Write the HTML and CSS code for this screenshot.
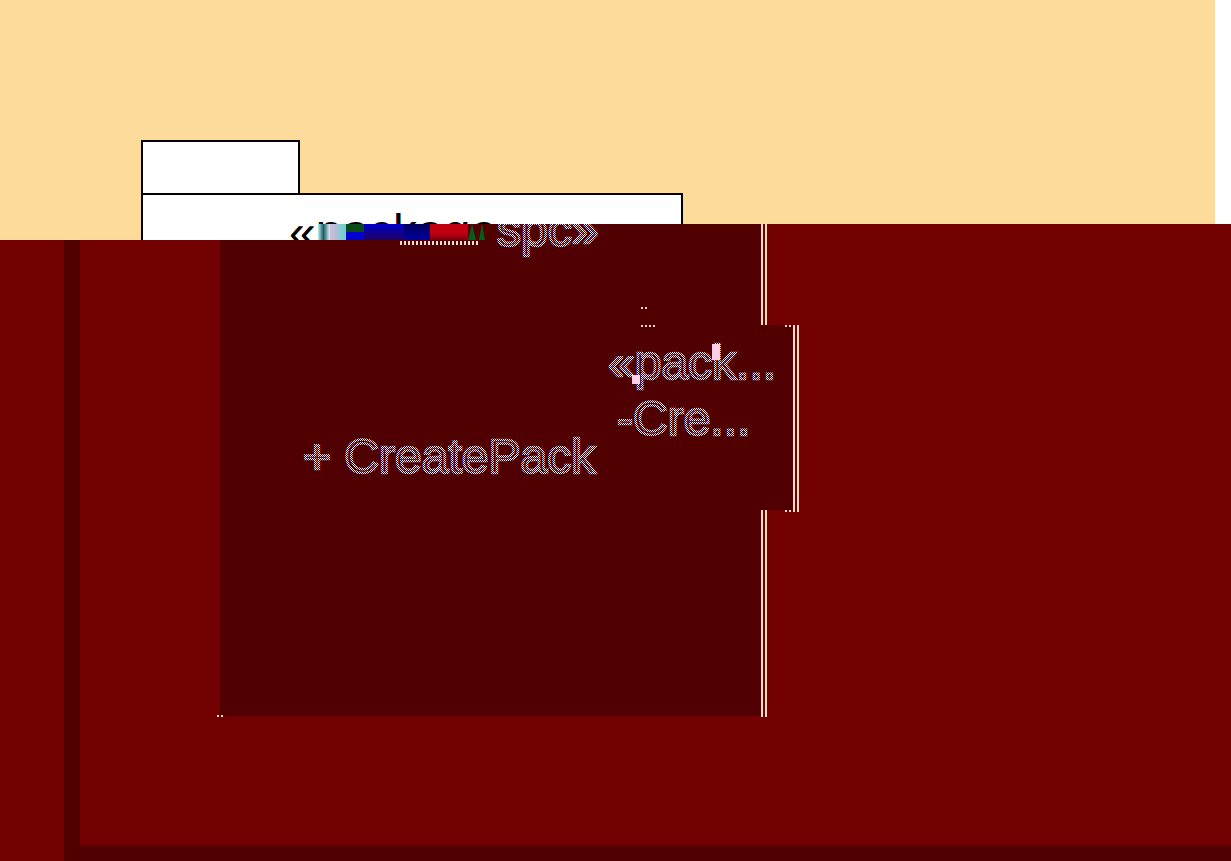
FILE: index.html
```html
<!DOCTYPE html>
<html lang="en">
<head>
<meta charset="utf-8">
<title>package</title>
<link rel="stylesheet" href="styles.css">
</head>
<body>
<div class="stage">
  <div class="strip"></div>
  <div class="tab"></div>
  <div class="package"></div>
  <div class="stereotype">«package</div>

  <div class="red-top"></div>
  <div class="red-main">
    <div class="rail"></div>
    <div class="floor"></div>
  </div>
  <div class="panel"></div>
  <div class="panel-head"></div>
  <div class="glitch">
    <span class="g g1"></span><span class="g g2"></span><span class="g g3"></span><span class="g g4"></span><span class="g g5"></span><span class="g g6"></span><span class="g g7"></span><span class="g g8"></span><span class="g g9"></span>
  </div>
  <div class="notch"></div>
  <div class="line l1"></div>
  <div class="line l2"></div>
  <div class="line l3"></div>
  <div class="line l4"></div>
  <div class="line l5"></div>
  <div class="line l6"></div>
  <div class="crumb c1"></div>
  <div class="crumb c2"></div>
  <div class="crumb c3"></div>
  <div class="crumb c4"></div>
  <div class="crumb c5"></div>
  <div class="crumb c6"></div>
  <div class="crumb c7"></div>

  <svg class="ghosts" width="1231" height="861" viewBox="0 0 1231 861" aria-label="ghost text">
    <defs>
      <pattern id="chk" width="2" height="2" patternUnits="userSpaceOnUse">
        <rect width="1" height="1" fill="#ffe6f2"></rect>
        <rect x="1" y="1" width="1" height="1" fill="#ffe6f2"></rect>
      </pattern>
      <clipPath id="head-clip">
        <rect x="490" y="224" width="120" height="34"></rect>
      </clipPath>
    </defs>
    <text class="ghost" x="497" y="246" clip-path="url(#head-clip)">spc»</text>
    <text class="ghost" x="608" y="379">«pack...</text>
    <text class="ghost" x="617" y="435">-Cre...</text>
    <text class="ghost" x="303" y="473">+ CreatePack</text>
  </svg>
  <div class="hot h1"></div>
  <div class="hot h2"></div>
</div>
</body>
</html>
```
FILE: styles.css
```css
* { box-sizing: border-box; }
html, body { margin: 0; height: 100%; overflow: hidden; }
body { background: #fddc9b; font-family: "Liberation Sans", Arial, sans-serif; }

.stage { position: relative; width: 1231px; height: 861px; overflow: hidden; }

.strip { position: absolute; left: 1215px; top: 0; width: 16px; height: 224px; background: #fff; }

.tab, .package { position: absolute; background: #fff; border: 2px solid #000; }
.tab { left: 141px; top: 140px; width: 159px; height: 55px; }
.package { left: 141px; top: 193px; width: 542px; height: 120px; }

.stereotype {
  position: absolute; left: 289px; top: 204px;
  font-size: 48px; line-height: 55px; color: #000; white-space: nowrap;
}

.red-top { position: absolute; left: 761px; top: 224px; width: 470px; height: 16px; background: #720000; }
.red-main { position: absolute; left: 0; top: 240px; width: 1231px; height: 621px; background: #720000; }
.rail { position: absolute; left: 64px; top: 0; width: 16px; height: 621px; background: #500000; }
.floor { position: absolute; left: 64px; bottom: 0; width: 1167px; height: 16px; background: #500000; }

.panel { position: absolute; left: 220px; top: 240px; width: 541px; height: 476px; background: #500000; }
.panel-head { position: absolute; left: 318px; top: 224px; width: 443px; height: 16px; background: #500000; }
.notch { position: absolute; left: 761px; top: 325px; width: 32px; height: 185px; background: #500000; }

.glitch { position: absolute; left: 318px; top: 224px; height: 16px; display: flex; }
.g { display: block; height: 16px; }
.g1 { width: 12px; background: linear-gradient(90deg, #bfeee8, #1a5c66 45%, #d8f4f0); }
.g2 { width: 16px; background: linear-gradient(90deg, #d8b8dc, #66d0d0); }
.g3 { width: 18px; background: linear-gradient(#0a4a1a 50%, #0000d0 50%); }
.g4 { width: 40px; background: linear-gradient(#0000c8, #200060); }
.g5 { width: 26px; background: linear-gradient(#00005a, #0000a0); }
.g6 { width: 38px; background: linear-gradient(#c00010 60%, #700010); }
.g7 { width: 8px; background: #006018; clip-path: polygon(50% 0, 100% 100%, 0 100%); }
.g8 { width: 3px; background: #500000; }
.g9 { width: 6px; background: #006018; clip-path: polygon(50% 0, 100% 100%, 0 100%); }

.line { position: absolute; background: #ffd9c8; }
.l1 { left: 761px; top: 224px; width: 2px; height: 101px; }
.l2 { left: 765px; top: 224px; width: 2px; height: 101px; }
.l3 { left: 761px; top: 510px; width: 2px; height: 207px; }
.l4 { left: 765px; top: 510px; width: 2px; height: 207px; }
.l5 { left: 793px; top: 325px; width: 2px; height: 187px; }
.l6 { left: 797px; top: 325px; width: 2px; height: 187px; }

.crumb { position: absolute; height: 2px; background: repeating-linear-gradient(90deg, #ffd9c8 0 2px, transparent 2px 4px); }
.c1 { left: 217px; top: 715px; width: 6px; }
.c3 { left: 785px; top: 325px; width: 8px; }
.c4 { left: 785px; top: 510px; width: 8px; }
.c5 { left: 641px; top: 307px; width: 6px; }
.c6 { left: 641px; top: 325px; width: 15px; }
.c7 { left: 400px; top: 241px; width: 80px; height: 4px; }

.ghosts { position: absolute; left: 0; top: 0; }
.ghost {
  font-family: "Liberation Sans", Arial, sans-serif;
  font-size: 48px;
  fill: #500000;
  stroke: url(#chk);
  stroke-width: 2.5px;
}

.hot { position: absolute; background: #ffd0e8; }
.h1 { left: 632px; top: 375px; width: 8px; height: 9px; }
.h2 { left: 712px; top: 344px; width: 8px; height: 16px; }
```
